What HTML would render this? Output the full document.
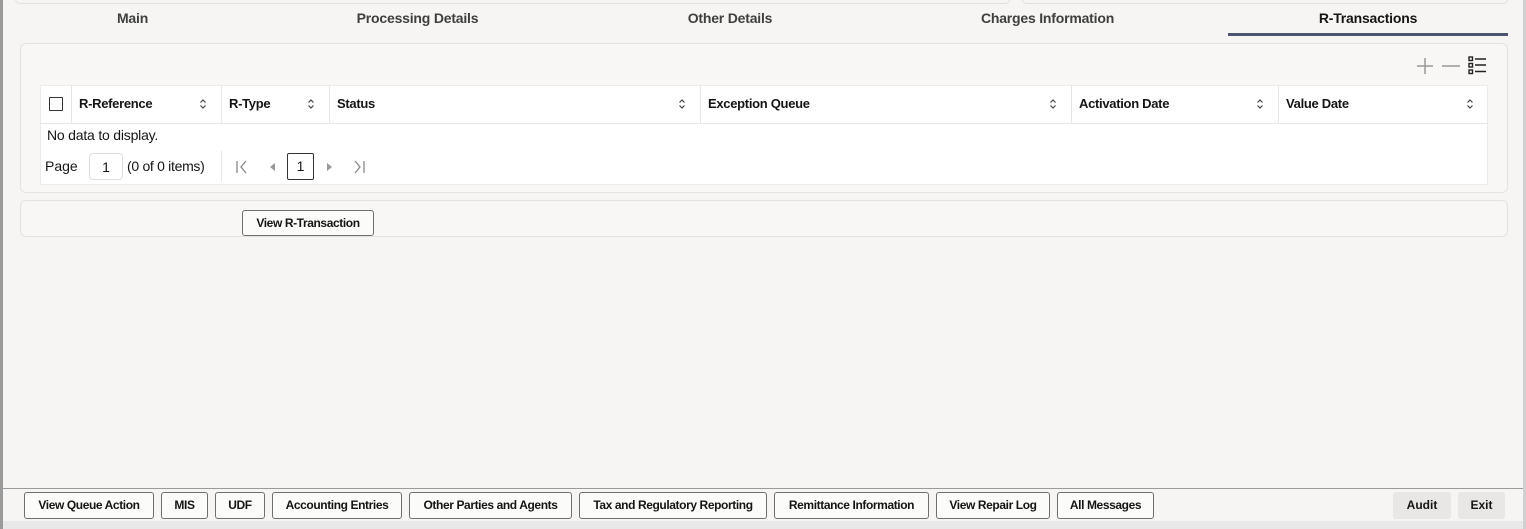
<!DOCTYPE html>
<html><head><meta charset="utf-8"><style>
*{box-sizing:border-box;margin:0;padding:0}
body{width:1526px;height:529px;overflow:hidden;background:#f6f5f3;font-family:"Liberation Sans",sans-serif;color:#161513;position:relative;font-size:13px}
.a{position:absolute}
.lb{left:0;top:0;width:3px;height:529px;background:#9a9a9a}
.rb{left:1523px;top:0;width:3px;height:529px;background:#d0d0d0}
.tab{top:10px;font-size:14px;font-weight:bold;color:#3f3f3d;text-align:center;letter-spacing:-0.2px}
.panel{background:#f8f7f5;border:1px solid #e4e2de;border-radius:6px}
.th{top:85px;height:38px;line-height:38px;font-weight:bold;font-size:13px;border-right:1px solid #e6e6e6;padding-left:7px;letter-spacing:-0.3px}
.sort{position:absolute;right:14px;top:13px}
.btn{top:492px;height:27px;line-height:25px;border:1px solid #6f6f6f;border-radius:3px;background:#fbfbfa;text-align:center;font-size:12px;font-weight:bold;letter-spacing:-0.4px;white-space:nowrap}
.gb{top:492px;height:27px;line-height:27px;background:#e8e7e5;border-radius:3px;text-align:center;font-weight:bold;font-size:12px}
</style></head><body>
<div class="a lb"></div><div class="a rb"></div>
<div class="a" style="left:15px;top:-6px;width:995px;height:10px;border:1px solid #e2e0dc;border-radius:5px"></div>
<div class="a" style="left:1022px;top:-6px;width:486px;height:10px;border:1px solid #e2e0dc;border-radius:5px"></div>
<div class="a tab" style="left:60px;width:145px">Main</div>
<div class="a tab" style="left:330px;width:175px">Processing Details</div>
<div class="a tab" style="left:650px;width:160px">Other Details</div>
<div class="a tab" style="left:960px;width:175px">Charges Information</div>
<div class="a tab" style="left:1228px;width:280px;color:#161513">R-Transactions</div>
<div class="a" style="left:1228px;top:33px;width:280px;height:3px;background:#4c5670"></div>

<div class="a panel" style="left:20px;top:43px;width:1488px;height:150px"></div>
<svg class="a" style="left:1412px;top:54px" width="78" height="22">
<path d="M13 4v16M5 12h16" stroke="#999" stroke-width="1.5"/><path d="M30 12h18" stroke="#999" stroke-width="1.5"/>
<g fill="none" stroke="#222" stroke-width="1.4"><rect x="57" y="3" width="3.5" height="3.5"/><rect x="57" y="9.5" width="3.5" height="3.5"/><rect x="57" y="16" width="3.5" height="3.5"/></g>
<g stroke="#222" stroke-width="1.6"><path d="M63 5h11M63 11h11M63 17.5h11"/></g></svg>
<div class="a" style="left:40px;top:85px;width:1448px;height:100px;background:#fff;border:1px solid #ebebeb"></div>
<div class="a" style="left:40px;top:123px;width:1448px;height:1px;background:#e6e6e6"></div>
<div class="a th" style="left:40px;width:32px"><span style="position:absolute;left:9px;top:12px;width:14px;height:14px;border:1.5px solid #333;border-radius:1px"></span></div>
<div class="a th" style="left:72px;width:150px">R-Reference<svg class="sort" width="8" height="12"><path d="M1.5 4.5L4 2l2.5 2.5M1.5 7.5L4 10l2.5-2.5" fill="none" stroke="#444" stroke-width="1.2"/></svg></div>
<div class="a th" style="left:222px;width:108px">R-Type<svg class="sort" width="8" height="12"><path d="M1.5 4.5L4 2l2.5 2.5M1.5 7.5L4 10l2.5-2.5" fill="none" stroke="#444" stroke-width="1.2"/></svg></div>
<div class="a th" style="left:330px;width:371px">Status<svg class="sort" width="8" height="12"><path d="M1.5 4.5L4 2l2.5 2.5M1.5 7.5L4 10l2.5-2.5" fill="none" stroke="#444" stroke-width="1.2"/></svg></div>
<div class="a th" style="left:701px;width:371px">Exception Queue<svg class="sort" width="8" height="12"><path d="M1.5 4.5L4 2l2.5 2.5M1.5 7.5L4 10l2.5-2.5" fill="none" stroke="#444" stroke-width="1.2"/></svg></div>
<div class="a th" style="left:1072px;width:207px">Activation Date<svg class="sort" width="8" height="12"><path d="M1.5 4.5L4 2l2.5 2.5M1.5 7.5L4 10l2.5-2.5" fill="none" stroke="#444" stroke-width="1.2"/></svg></div>
<div class="a th" style="left:1279px;width:209px;border-right:none">Value Date<svg class="sort" width="8" height="12"><path d="M1.5 4.5L4 2l2.5 2.5M1.5 7.5L4 10l2.5-2.5" fill="none" stroke="#444" stroke-width="1.2"/></svg></div>
<div class="a" style="left:47px;top:127px;font-size:14px;letter-spacing:-0.2px">No data to display.</div>
<div class="a" style="left:45px;top:158px;font-size:14px">Page</div>
<div class="a" style="left:89px;top:153px;width:34px;height:27px;border:1px solid #ddd;border-radius:4px;text-align:center;line-height:27px;font-size:14px">1</div>
<div class="a" style="left:127px;top:158px;font-size:14px;letter-spacing:-0.3px">(0 of 0 items)</div>
<div class="a" style="left:221px;top:151px;width:1px;height:30px;background:#e4e4e4"></div>
<svg class="a" style="left:234px;top:159px" width="140" height="16"><g fill="none" stroke="#888" stroke-width="1.3"><path d="M3 2v12M12 2L7 8l5 6"/><path d="M130 2v12M121 2l5 6-5 6"/></g><path d="M41 4v8l-5-4z" fill="#999"/><path d="M93 4v8l5-4z" fill="#999"/></svg>
<div class="a" style="left:287px;top:153px;width:27px;height:27px;border:1.5px solid #333;border-radius:2px;text-align:center;line-height:25px;font-size:14px">1</div>

<div class="a panel" style="left:20px;top:200px;width:1488px;height:37px"></div>
<div class="a btn" style="left:242px;top:210px;width:132px;height:26px;line-height:24px">View R-Transaction</div>

<div class="a" style="left:3px;top:488px;width:1520px;height:1px;background:#9a9a9a"></div>
<div class="a" style="left:3px;top:521px;width:1520px;height:8px;background:#e8e8e8"></div>
<div class="a btn" style="left:24px;width:130px">View Queue Action</div>
<div class="a btn" style="left:161px;width:47px">MIS</div>
<div class="a btn" style="left:215px;width:50px">UDF</div>
<div class="a btn" style="left:272px;width:130px">Accounting Entries</div>
<div class="a btn" style="left:409px;width:163px">Other Parties and Agents</div>
<div class="a btn" style="left:579px;width:188px">Tax and Regulatory Reporting</div>
<div class="a btn" style="left:774px;width:155px">Remittance Information</div>
<div class="a btn" style="left:936px;width:114px">View Repair Log</div>
<div class="a btn" style="left:1057px;width:97px">All Messages</div>
<div class="a gb" style="left:1393px;width:58px">Audit</div>
<div class="a gb" style="left:1458px;width:47px">Exit</div>
</body></html>
